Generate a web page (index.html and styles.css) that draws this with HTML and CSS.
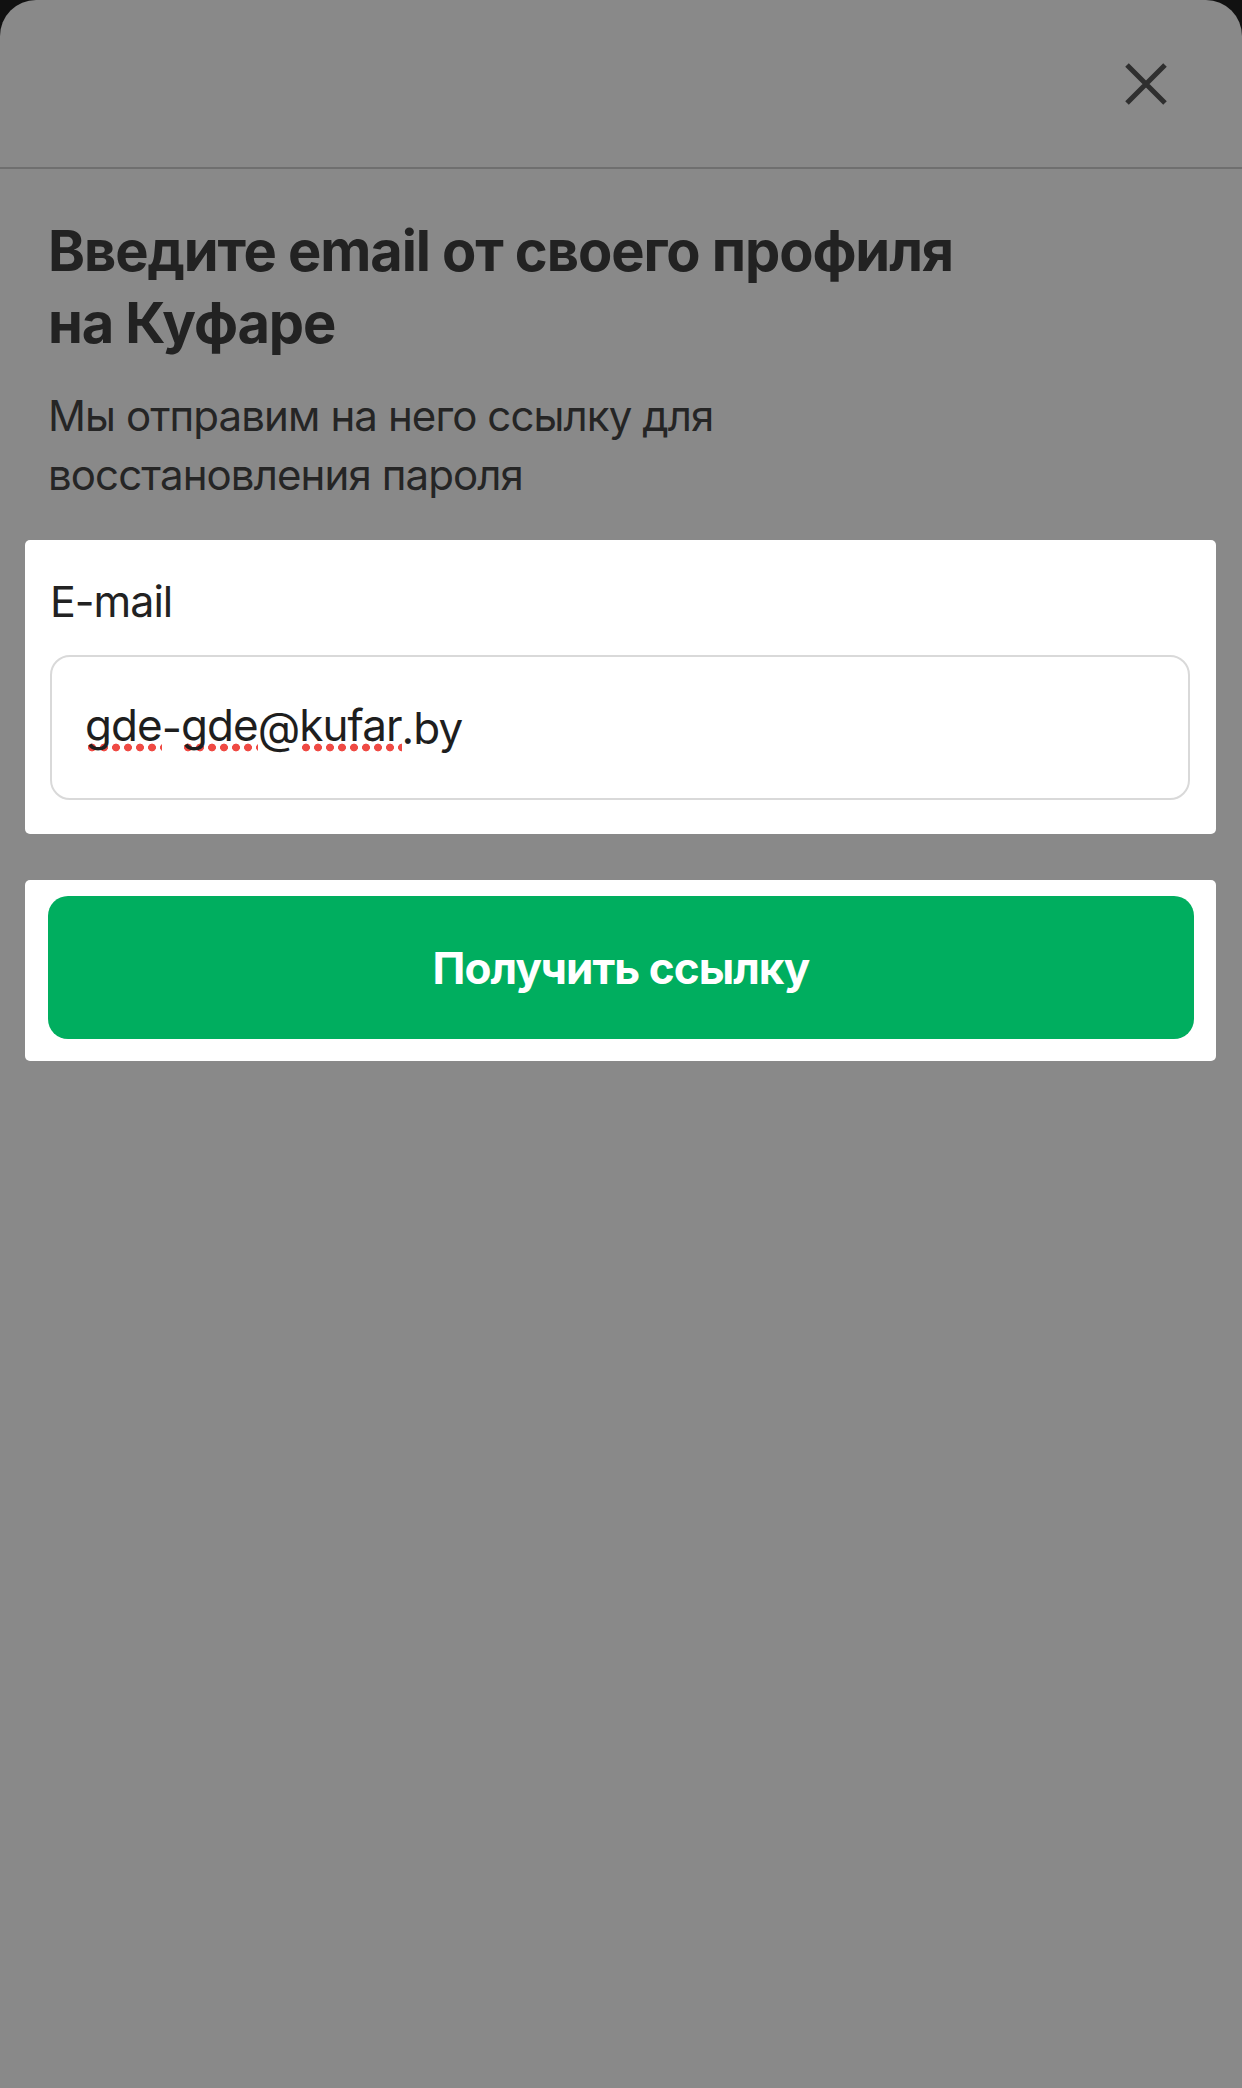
FILE: index.html
```html
<!DOCTYPE html>
<html lang="ru">
<head>
<meta charset="utf-8">
<title>Восстановление пароля</title>
<link rel="stylesheet" href="styles.css">
</head>
<body>
<div class="sheet">
  <header class="header">
    <button class="close" aria-label="Закрыть">
      <svg width="48" height="48" viewBox="0 0 48 48"><path d="M5 5 L43 43 M43 5 L5 43" stroke="#2f2f2f" stroke-width="5" stroke-linecap="butt" fill="none"/></svg>
    </button>
  </header>
  <section class="intro">
    <h1 class="title">Введите email от своего профиля<br>на Куфаре</h1>
    <p class="subtitle">Мы отправим на него ссылку для<br>восстановления пароля</p>
  </section>
  <div class="card card-form">
    <label class="label">E-mail</label>
    <div class="field"><span class="typo">gde</span>-<span class="typo">gde</span>@<span class="typo">kufar</span>.by</div>
  </div>
  <div class="card card-action">
    <button class="submit">Получить ссылку</button>
  </div>
</div>
</body>
</html>
```
FILE: styles.css
```css
html, body {
  margin: 0;
  padding: 0;
  background: #111111;
}
body {
  font-family: Inter, "Noto Sans", "Liberation Sans", sans-serif;
  color: #222222;
}
.sheet {
  background: #898989;
  border-radius: 36px 36px 0 0;
  min-height: 2088px;
  box-sizing: border-box;
  overflow: hidden;
}
.header {
  height: 167px;
  border-bottom: 2px solid #6f6f6f;
  display: flex;
  justify-content: flex-end;
  align-items: center;
  padding-right: 72px;
}
.close {
  background: none;
  border: 0;
  padding: 0;
  width: 48px;
  height: 48px;
  display: flex;
}
.intro {
  padding: 46px 48px 0;
}
.title {
  margin: 0;
  font-size: 56px;
  line-height: 72px;
  font-weight: 700;
  letter-spacing: -1.1px;
  color: #222222;
}
.subtitle {
  margin: 27px 0 0;
  font-size: 42px;
  line-height: 59px;
  font-weight: 400;
  letter-spacing: -0.9px;
  color: #252525;
}
.card {
  background: #ffffff;
  margin: 0 26px 0 25px;
  border-radius: 5px;
}
.card-form {
  margin-top: 36px;
  padding: 32px 26px 34px 25px;
}
.label {
  display: block;
  font-size: 43px;
  line-height: 58px;
  letter-spacing: -1px;
  color: #222222;
}
.field {
  margin-top: 25px;
  border: 2px solid #d9d9d9;
  border-radius: 20px;
  box-sizing: border-box;
  height: 145px;
  display: flex;
  align-items: center;
  padding: 0 0 0 33px;
  font-size: 44px;
  letter-spacing: -0.95px;
  color: #1e1e1e;
}
.typo {
  background-image: radial-gradient(circle, #ef4a44 3.6px, transparent 4.2px);
  background-size: 12px 9px;
  background-repeat: repeat-x;
  background-position: 1px 45px;
  padding-bottom: 6px;
}
.card-action {
  margin-top: 46px;
  padding: 16px 22px 22px 23px;
}
.submit {
  display: block;
  width: 100%;
  height: 143px;
  border: 0;
  border-radius: 20px;
  background: #00ae5f;
  color: #ffffff;
  font-family: Inter, "Noto Sans", "Liberation Sans", sans-serif;
  font-size: 44px;
  font-weight: 700;
  letter-spacing: -0.95px;
  padding: 0;
}
```
